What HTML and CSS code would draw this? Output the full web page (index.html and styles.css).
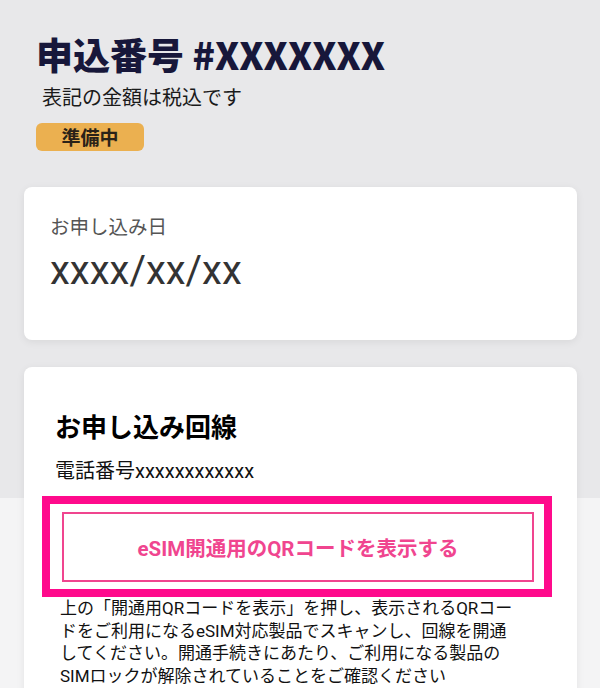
FILE: index.html
```html
<!DOCTYPE html>
<html lang="ja">
<head>
  <meta charset="UTF-8" />
  <meta name="viewport" content="width=device-width, initial-scale=1" />
  <title>申込番号</title>
  <link rel="stylesheet" href="styles.css">
</head>
<body>
  <main class="page">
    <header class="order-head">
      <h1 class="order-title">申込番号 #XXXXXXX</h1>
      <p class="order-note">表記の金額は税込です</p>
      <span class="status-badge">準備中</span>
    </header>

    <section class="card date-card">
      <p class="date-label">お申し込み日</p>
      <p class="date-value">xxxx/xx/xx</p>
    </section>

    <section class="card line-card">
      <h2 class="line-title">お申し込み回線</h2>
      <p class="line-phone">電話番号xxxxxxxxxxxx</p>
      <div class="highlight">
        <button class="qr-btn" type="button">eSIM開通用のQRコードを表示する</button>
      </div>
      <p class="line-help">上の「開通用QRコードを表示」を押し、表示されるQRコードをご利用になるeSIM対応製品でスキャンし、回線を開通してください。開通手続きにあたり、ご利用になる製品のSIMロックが解除されていることをご確認ください</p>
    </section>
  </main>
</body>
</html>
```

FILE: styles.css
```css
:root {
  --bg-top: #e8e8ea;
  --bg-bottom: #f4f4f5;
  --navy: #17173a;
  --pink: #ff0a8c;
  --pink-soft: #f0458f;
  --badge: #ebb050;
  --shadow: 0 2px 8px rgba(0, 0, 0, 0.07);
}

* {
  box-sizing: border-box;
}

body {
  margin: 0;
  min-height: 100vh;
  background: linear-gradient(to bottom, var(--bg-top) 0, var(--bg-top) 498px, var(--bg-bottom) 498px);
  font-family: Roboto, "Noto Sans CJK JP", sans-serif;
  color: #111;
}

.page {
  padding: 0 23px 0 24px;
}

.order-head {
  padding: 32px 0 0 12px;
  display: flex;
  flex-direction: column;
  align-items: flex-start;
}

.order-title {
  margin: 0;
  font-family: "Noto Sans CJK JP", sans-serif;
  font-size: 37px;
  font-weight: 900;
  line-height: 44px;
  color: var(--navy);
}

.order-note {
  margin: 8px 0 0 6px;
  font-size: 20px;
  line-height: 28px;
  color: #1a1a1a;
}

.status-badge {
  margin: 11px 0 0 0;
  width: 108px;
  height: 28px;
  border-radius: 6px;
  background: var(--badge);
  color: #2a2218;
  font-family: "Noto Sans CJK JP", sans-serif;
  font-size: 19px;
  font-weight: 700;
  line-height: 28px;
  text-align: center;
}

.card {
  background: #fff;
  border-radius: 8px;
  box-shadow: var(--shadow);
}

.date-card {
  margin-top: 36px;
  height: 153px;
  padding: 27px 26px 0;
}

.date-label {
  margin: 0;
  font-size: 19.5px;
  line-height: 28px;
  color: #555;
}

.date-value {
  margin: 6px 0 0;
  font-size: 40px;
  line-height: 46px;
  color: #333;
}

.line-card {
  margin-top: 27px;
  padding: 41px 28px 40px 31px;
}

.line-title {
  margin: 0;
  font-family: "Noto Sans CJK JP", sans-serif;
  font-size: 26px;
  font-weight: 700;
  line-height: 36px;
  color: #000;
}

.line-phone {
  margin: 13px 0 0;
  font-size: 20px;
  line-height: 28px;
  color: #111;
}

.highlight {
  margin: 11px -3px 0 -13px;
  border: 8px solid var(--pink);
  padding: 8px 10px 7px 12px;
}

.qr-btn {
  display: block;
  width: 100%;
  height: 70px;
  background: #fff;
  border: 2px solid var(--pink-soft);
  color: var(--pink-soft);
  font-family: inherit;
  font-size: 20.5px;
  font-weight: 700;
  cursor: pointer;
}

.line-help {
  margin: 0 0 0 5px;
  max-width: 454px;
  font-size: 17px;
  line-height: 22.5px;
  color: #111;
}
```
